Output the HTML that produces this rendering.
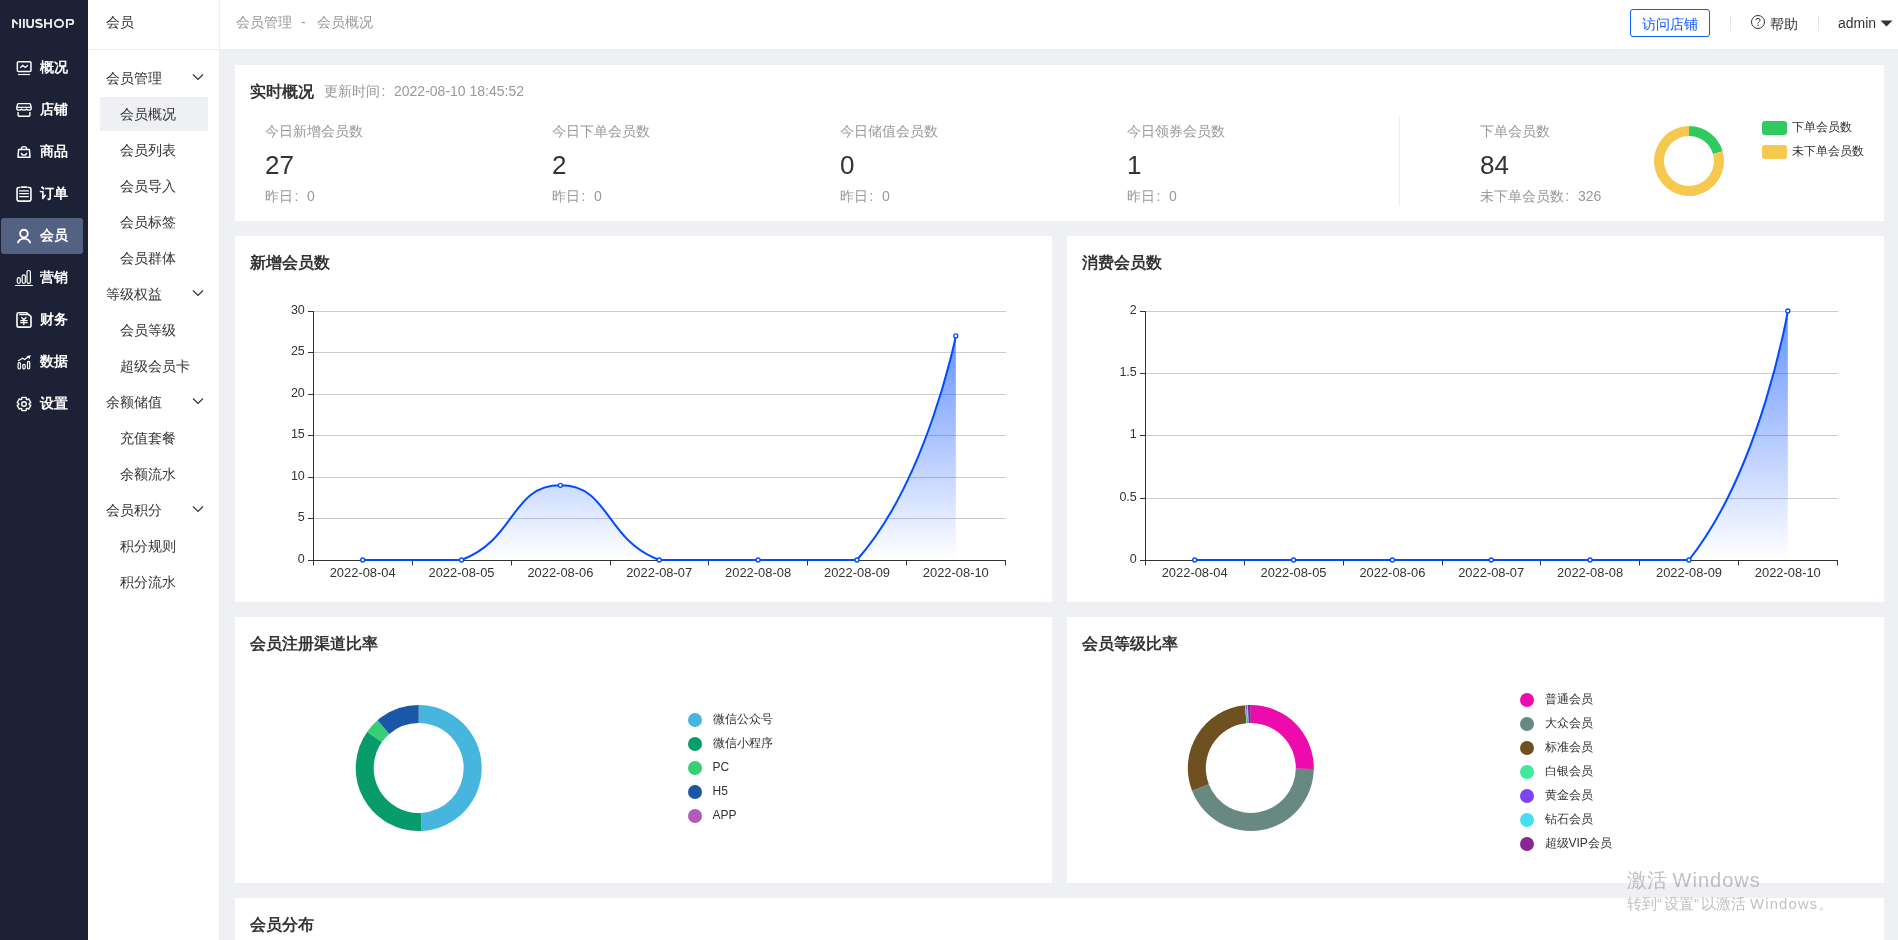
<!DOCTYPE html><html><head><meta charset="utf-8"><title>会员概况</title><style>
*{margin:0;padding:0;box-sizing:border-box}
html,body{width:1898px;height:940px;overflow:hidden;background:#eff0f4;font-family:"Liberation Sans",sans-serif;font-size:14px;color:#333}
.a{position:absolute;white-space:nowrap;line-height:18px}
#side{position:absolute;left:0;top:0;width:88px;height:940px;background:#1d2136}
#logo{position:absolute;left:12px;top:15px;color:#fff;font-size:12.5px;letter-spacing:0.9px;line-height:16px}
.mt{position:absolute;left:40px;color:#fff;line-height:18px;font-weight:bold;font-size:13.6px;white-space:nowrap}
.ic{position:absolute;left:16px}
#sub{position:absolute;left:88px;top:0;width:132px;height:940px;background:#fff;border-right:1px solid #eeeeee}
#subhd{position:absolute;left:0;top:0;width:131px;height:50px;border-bottom:1px solid #eeeeee}
#hdr{position:absolute;left:220px;top:0;width:1678px;height:49px;background:#fff}
.card{position:absolute;background:#fff}
.ttl{position:absolute;font-size:16px;font-weight:bold;color:#333;line-height:20px;white-space:nowrap}
.lab{position:absolute;color:#999;font-size:14px;line-height:18px;white-space:nowrap}
.num{position:absolute;color:#333;font-size:26px;line-height:30px;white-space:nowrap}
svg{position:absolute;left:0;top:0;overflow:visible}
</style></head><body><div id="root" style="position:absolute;left:0;top:0;width:1898px;height:940px;overflow:hidden;will-change:transform">
<div id="side">
<svg style="left:0;top:0" width="88" height="40" viewBox="0 0 88 40"><g fill="none" stroke="#ececec" stroke-width="1.9"><path d="M13 28 V19.6 L17.6 24.2 M20.1 18.9 V28" stroke-linejoin="bevel"/><path d="M23.9 18.9 V28"/><path d="M27.2 18.9 V24.4 Q27.2 27.1 30.1 27.1 Q33 27.1 33 24.4 V18.9"/><path d="M41.6 20.6 Q40.8 19.8 39 19.8 Q36.1 19.8 36.1 21.5 Q36.1 23 39 23.4 Q41.9 23.8 41.9 25.4 Q41.9 27.1 39 27.1 Q36.8 27.1 35.9 26"/><path d="M45 18.9 V28 M51 18.9 V28 M45 23.4 H51"/><ellipse cx="59" cy="23.45" rx="4.15" ry="3.65"/><path d="M66.9 28 V19.85 H71.5 Q73.2 19.85 73.2 21.9 Q73.2 24.1 71.2 24.1 H69"/></g></svg>
<div style="position:absolute;left:1px;top:218px;width:82px;height:36px;background:#536183;border-radius:3px"></div>
<svg class="ic" style="left:16px;top:60px" width="16" height="16" viewBox="0 0 16 16"><rect x="1.35" y="1.65" width="13.6" height="9.9" rx="1" fill="none" stroke="#fff" stroke-width="1.5"/><path d="M4.2 7.7 L6.8 5.4 L9.2 7.5 L12 5.2" fill="none" stroke="#fff" stroke-width="1.3"/><path d="M2 14.5 H14" stroke="#fff" stroke-width="1.2"/></svg>
<div class="mt" style="top:59px">概况</div>
<svg class="ic" style="left:16px;top:102px" width="16" height="16" viewBox="0 0 16 16"><path d="M2.6 1.6 H13.4 Q14.2 1.6 14.5 2.5 L15.2 5.6 Q15.5 8.1 13.1 8.1 Q11 8.1 10.5 6.9 Q10 8.1 8 8.1 Q6 8.1 5.5 6.9 Q5 8.1 2.9 8.1 Q0.5 8.1 0.8 5.6 L1.5 2.5 Q1.8 1.6 2.6 1.6 Z" fill="none" stroke="#fff" stroke-width="1.4" stroke-linejoin="round"/><path d="M1.2 5.3 H14.8" stroke="#fff" stroke-width="1.2"/><path d="M2.1 10.1 V13.3 Q2.1 14.2 3 14.2 H13 Q13.9 14.2 13.9 13.3 V10.1" fill="none" stroke="#fff" stroke-width="1.4"/></svg>
<div class="mt" style="top:101px">店铺</div>
<svg class="ic" style="left:16px;top:144px" width="16" height="16" viewBox="0 0 16 16"><path d="M2.6 5.5 H13.4 L14 13.2 H2 Z" fill="none" stroke="#fff" stroke-width="1.5" stroke-linejoin="round"/><path d="M5.4 5.4 V4.6 Q5.4 2.6 8 2.6 Q10.6 2.6 10.6 4.6 V5.4" fill="none" stroke="#fff" stroke-width="1.4"/><path d="M5.3 8.8 Q5.6 11.1 8 11.1 Q10.4 11.1 10.7 8.8" fill="none" stroke="#fff" stroke-width="1.3"/></svg>
<div class="mt" style="top:143px">商品</div>
<svg class="ic" style="left:16px;top:186px" width="16" height="16" viewBox="0 0 16 16"><path d="M4.3 1.5 H2.7 Q1.05 1.5 1.05 3.1 V13.5 Q1.05 15.1 2.7 15.1 H13.3 Q14.95 15.1 14.95 13.5 V3.1 Q14.95 1.5 13.3 1.5 H11.7" fill="none" stroke="#fff" stroke-width="1.6"/><path d="M5.5 1.1 H10.7" stroke="#fff" stroke-width="1.6" stroke-linecap="round"/><path d="M3.6 4.9 H12.4 M3.6 7.7 H12.4 M3.6 10.6 H12.4" stroke="#fff" stroke-width="1.2" stroke-linecap="round"/></svg>
<div class="mt" style="top:185px">订单</div>
<svg class="ic" style="left:16px;top:228px" width="16" height="16" viewBox="0 0 16 16"><circle cx="7.95" cy="5.6" r="3.85" fill="none" stroke="#fff" stroke-width="1.9"/><path d="M2 15.2 A6.05 4.6 0 0 1 14.1 15.2" fill="none" stroke="#fff" stroke-width="1.9"/></svg>
<div class="mt" style="top:227px">会员</div>
<svg class="ic" style="left:16px;top:270px" width="16" height="16" viewBox="0 0 16 16"><rect x="1.3" y="7.7" width="3" height="5.6" rx="1.5" fill="none" stroke="#fff" stroke-width="1.2"/><rect x="6.2" y="4.8" width="3.1" height="8.5" rx="1.5" fill="none" stroke="#fff" stroke-width="1.2"/><rect x="11" y="0.5" width="3.4" height="12.8" rx="1.6" fill="none" stroke="#fff" stroke-width="1.2"/><path d="M-0.4 15.5 H16.4" stroke="#fff" stroke-width="1.2" stroke-linecap="round"/></svg>
<div class="mt" style="top:269px">营销</div>
<svg class="ic" style="left:16px;top:312px" width="16" height="16" viewBox="0 0 16 16"><path d="M2.6 0.8 H10.6 L15 4.6 V13.4 Q15 15.1 13.3 15.1 H2.7 Q1 15.1 1 13.4 V2.4 Q1 0.8 2.6 0.8 Z" fill="none" stroke="#fff" stroke-width="1.6" stroke-linejoin="round"/><path d="M3.5 2.6 H12.7" stroke="#fff" stroke-width="1.2" stroke-linecap="round"/><path d="M5.4 5.2 L7.8 7.8 L10.4 5.2 M4.3 8.6 H11.6 M4.3 10.6 H11.6 M7.8 7.8 V12.9" fill="none" stroke="#fff" stroke-width="1.3"/></svg>
<div class="mt" style="top:311px">财务</div>
<svg class="ic" style="left:16px;top:354px" width="16" height="16" viewBox="0 0 16 16"><rect x="2.1" y="8.6" width="2.4" height="6.3" rx="1.1" fill="none" stroke="#fff" stroke-width="1.2"/><rect x="6.8" y="10.4" width="2.4" height="4.5" rx="1.1" fill="none" stroke="#fff" stroke-width="1.2"/><rect x="11.5" y="7.3" width="2.2" height="7.6" rx="1.1" fill="none" stroke="#fff" stroke-width="1.2"/><path d="M2 7 L6.5 4.2 L8.6 5.6 L11.8 3.3" fill="none" stroke="#fff" stroke-width="1.2" stroke-linejoin="round"/><path d="M14.7 1 L10.3 2.4 L13.6 5.1 Z" fill="#fff"/></svg>
<div class="mt" style="top:353px">数据</div>
<svg class="ic" style="left:16px;top:396px" width="16" height="16" viewBox="0 0 16 16"><path d="M5.90 3.10 L5.90 1.40 L10.10 1.40 L10.10 3.10 L11.19 3.73 L12.67 2.88 L14.77 6.52 L13.29 7.37 L13.29 8.63 L14.77 9.48 L12.67 13.12 L11.19 12.27 L10.10 12.90 L10.10 14.60 L5.90 14.60 L5.90 12.90 L4.81 12.27 L3.33 13.12 L1.23 9.48 L2.71 8.63 L2.71 7.37 L1.23 6.52 L3.33 2.88 L4.81 3.73 Z" fill="none" stroke="#fff" stroke-width="1.4" stroke-linejoin="round"/><circle cx="8" cy="8" r="2.3" fill="none" stroke="#fff" stroke-width="1.4"/></svg>
<div class="mt" style="top:395px">设置</div>
</div>
<div id="sub"><div id="subhd"><div class="a" style="left:18px;top:13px;color:#333">会员</div></div>
<div style="position:absolute;left:12px;top:97px;width:108px;height:34px;background:#eff0f4"></div>
<div class="a" style="left:18px;top:69px;color:#333">会员管理</div>
<svg style="left:104px;top:73px" width="12" height="8" viewBox="0 0 12 8"><path d="M1 1.5 L6 6.5 L11 1.5" fill="none" stroke="#333" stroke-width="1.2"/></svg>
<div class="a" style="left:32px;top:105px;color:#333">会员概况</div>
<div class="a" style="left:32px;top:141px;color:#333">会员列表</div>
<div class="a" style="left:32px;top:177px;color:#333">会员导入</div>
<div class="a" style="left:32px;top:213px;color:#333">会员标签</div>
<div class="a" style="left:32px;top:249px;color:#333">会员群体</div>
<div class="a" style="left:18px;top:285px;color:#333">等级权益</div>
<svg style="left:104px;top:289px" width="12" height="8" viewBox="0 0 12 8"><path d="M1 1.5 L6 6.5 L11 1.5" fill="none" stroke="#333" stroke-width="1.2"/></svg>
<div class="a" style="left:32px;top:321px;color:#333">会员等级</div>
<div class="a" style="left:32px;top:357px;color:#333">超级会员卡</div>
<div class="a" style="left:18px;top:393px;color:#333">余额储值</div>
<svg style="left:104px;top:397px" width="12" height="8" viewBox="0 0 12 8"><path d="M1 1.5 L6 6.5 L11 1.5" fill="none" stroke="#333" stroke-width="1.2"/></svg>
<div class="a" style="left:32px;top:429px;color:#333">充值套餐</div>
<div class="a" style="left:32px;top:465px;color:#333">余额流水</div>
<div class="a" style="left:18px;top:501px;color:#333">会员积分</div>
<svg style="left:104px;top:505px" width="12" height="8" viewBox="0 0 12 8"><path d="M1 1.5 L6 6.5 L11 1.5" fill="none" stroke="#333" stroke-width="1.2"/></svg>
<div class="a" style="left:32px;top:537px;color:#333">积分规则</div>
<div class="a" style="left:32px;top:573px;color:#333">积分流水</div>
</div>
<div id="hdr">
<div class="a" style="left:16px;top:13px;color:#999">会员管理</div><div class="a" style="left:81px;top:13px;color:#999">-</div><div class="a" style="left:97px;top:13px;color:#999">会员概况</div>
<div style="position:absolute;left:1410px;top:9px;width:80px;height:28px;border:1px solid #105cfb;border-radius:3px"></div>
<div class="a" style="left:1422px;top:15px;color:#105cfb">访问店铺</div>
<div style="position:absolute;left:1510px;top:15px;width:1px;height:16px;background:#e6e6e6"></div>
<svg style="left:1530px;top:14px" width="16" height="16" viewBox="0 0 16 16"><circle cx="8" cy="8" r="6.5" fill="none" stroke="#333" stroke-width="1"/><path d="M5.9 6.2 Q5.9 4.3 8 4.3 Q10.1 4.3 10.1 6.1 Q10.1 7.2 8.9 7.8 Q8 8.3 8 9.5" fill="none" stroke="#333" stroke-width="1"/><circle cx="8" cy="11.3" r="0.7" fill="#333"/></svg>
<div class="a" style="left:1550px;top:14.5px;color:#333">帮助</div>
<div style="position:absolute;left:1598px;top:15px;width:1px;height:16px;background:#e6e6e6"></div>
<div class="a" style="left:1618px;top:14px;color:#333">admin</div>
<svg style="left:1660px;top:20px" width="13" height="7" viewBox="0 0 13 7"><path d="M0.5 0.5 H12.5 L6.5 6.5 Z" fill="#333"/></svg>
</div>
<div class="card" style="left:235px;top:65px;width:1649px;height:156px">
<div class="ttl" style="left:15px;top:17px">实时概况</div>
<div class="lab" style="left:89px;top:17px">更新时间<span style="display:inline-block;width:14px;padding-left:1.5px">:</span>2022-08-10 18:45:52</div>
<div class="lab" style="left:30px;top:57px">今日新增会员数</div>
<div class="num" style="left:30px;top:85px">27</div>
<div class="lab" style="left:30px;top:122px">昨日<span style="display:inline-block;width:14px;padding-left:1.5px">:</span>0</div>
<div class="lab" style="left:317px;top:57px">今日下单会员数</div>
<div class="num" style="left:317px;top:85px">2</div>
<div class="lab" style="left:317px;top:122px">昨日<span style="display:inline-block;width:14px;padding-left:1.5px">:</span>0</div>
<div class="lab" style="left:605px;top:57px">今日储值会员数</div>
<div class="num" style="left:605px;top:85px">0</div>
<div class="lab" style="left:605px;top:122px">昨日<span style="display:inline-block;width:14px;padding-left:1.5px">:</span>0</div>
<div class="lab" style="left:892px;top:57px">今日领券会员数</div>
<div class="num" style="left:892px;top:85px">1</div>
<div class="lab" style="left:892px;top:122px">昨日<span style="display:inline-block;width:14px;padding-left:1.5px">:</span>0</div>
<div style="position:absolute;left:1164px;top:51px;width:1px;height:90px;background:#eeeeee"></div>
<div class="lab" style="left:1245px;top:57px">下单会员数</div>
<div class="num" style="left:1245px;top:85px">84</div>
<div class="lab" style="left:1245px;top:122px">未下单会员数<span style="display:inline-block;width:14px;padding-left:1.5px">:</span>326</div>
</div>
<svg width="1898" height="940" style="left:0;top:0;pointer-events:none">
<path d="M1689.00 126.00 A35.00 35.00 0 0 1 1722.60 151.21 L1713.00 154.01 A25.00 25.00 0 0 0 1689.00 136.00 Z" fill="#31ca61"/><path d="M1722.60 151.21 A35.00 35.00 0 1 1 1689.00 126.00 L1689.00 136.00 A25.00 25.00 0 1 0 1713.00 154.01 Z" fill="#f5c84f"/>
</svg>
<div style="position:absolute;left:1762px;top:121px;width:25px;height:14px;border-radius:3px;background:#31ca61"></div>
<div style="position:absolute;left:1762px;top:145px;width:25px;height:14px;border-radius:3px;background:#f5c84f"></div>
<div class="a" style="left:1792px;top:118px;font-size:12px;color:#333">下单会员数</div>
<div class="a" style="left:1792px;top:142px;font-size:12px;color:#333">未下单会员数</div>
<div class="card" style="left:235px;top:236px;width:817px;height:366px"><div class="ttl" style="left:15px;top:17px">新增会员数</div></div>
<div class="card" style="left:1067px;top:236px;width:817px;height:366px"><div class="ttl" style="left:15px;top:17px">消费会员数</div></div>
<div class="card" style="left:235px;top:617px;width:817px;height:266px"><div class="ttl" style="left:15px;top:17px">会员注册渠道比率</div></div>
<div class="card" style="left:1067px;top:617px;width:817px;height:266px"><div class="ttl" style="left:15px;top:17px">会员等级比率</div></div>
<div class="card" style="left:235px;top:898px;width:1649px;height:60px"><div class="ttl" style="left:15px;top:17px">会员分布</div></div>
<svg width="1898" height="940" style="left:0;top:0"><defs><linearGradient id="g313" x1="0" y1="0" x2="0" y2="1"><stop offset="0" stop-color="#004bff" stop-opacity="0.6"/><stop offset="1" stop-color="#004bff" stop-opacity="0"/></linearGradient></defs><path d="M308.0 560.5 H313.5" stroke="#333" stroke-width="1"/><text x="304.8" y="562.8" text-anchor="end" font-size="12.5" fill="#333" font-family="Liberation Sans">0</text><path d="M313.5 518.5 H1006.0" stroke="#cccccc" stroke-width="1"/><path d="M308.0 518.5 H313.5" stroke="#333" stroke-width="1"/><text x="304.8" y="521.3" text-anchor="end" font-size="12.5" fill="#333" font-family="Liberation Sans">5</text><path d="M313.5 477.5 H1006.0" stroke="#cccccc" stroke-width="1"/><path d="M308.0 477.5 H313.5" stroke="#333" stroke-width="1"/><text x="304.8" y="479.8" text-anchor="end" font-size="12.5" fill="#333" font-family="Liberation Sans">10</text><path d="M313.5 435.5 H1006.0" stroke="#cccccc" stroke-width="1"/><path d="M308.0 435.5 H313.5" stroke="#333" stroke-width="1"/><text x="304.8" y="438.3" text-anchor="end" font-size="12.5" fill="#333" font-family="Liberation Sans">15</text><path d="M313.5 394.5 H1006.0" stroke="#cccccc" stroke-width="1"/><path d="M308.0 394.5 H313.5" stroke="#333" stroke-width="1"/><text x="304.8" y="396.8" text-anchor="end" font-size="12.5" fill="#333" font-family="Liberation Sans">20</text><path d="M313.5 352.5 H1006.0" stroke="#cccccc" stroke-width="1"/><path d="M308.0 352.5 H313.5" stroke="#333" stroke-width="1"/><text x="304.8" y="355.3" text-anchor="end" font-size="12.5" fill="#333" font-family="Liberation Sans">25</text><path d="M313.5 311.5 H1006.0" stroke="#cccccc" stroke-width="1"/><path d="M308.0 311.5 H313.5" stroke="#333" stroke-width="1"/><text x="304.8" y="313.8" text-anchor="end" font-size="12.5" fill="#333" font-family="Liberation Sans">30</text><path d="M313.5 311.0 V561.0" stroke="#333" stroke-width="1"/><path d="M313.0 560.5 H1006.0" stroke="#333" stroke-width="1"/><path d="M313.5 560.0 V565.5" stroke="#333" stroke-width="1"/><path d="M412.5 560.0 V565.5" stroke="#333" stroke-width="1"/><path d="M511.5 560.0 V565.5" stroke="#333" stroke-width="1"/><path d="M610.5 560.0 V565.5" stroke="#333" stroke-width="1"/><path d="M708.5 560.0 V565.5" stroke="#333" stroke-width="1"/><path d="M807.5 560.0 V565.5" stroke="#333" stroke-width="1"/><path d="M906.5 560.0 V565.5" stroke="#333" stroke-width="1"/><path d="M1005.5 560.0 V565.5" stroke="#333" stroke-width="1"/><text x="362.7" y="577" text-anchor="middle" font-size="12" fill="#333" font-family="Liberation Sans" textLength="66" lengthAdjust="spacingAndGlyphs">2022-08-04</text><text x="461.5" y="577" text-anchor="middle" font-size="12" fill="#333" font-family="Liberation Sans" textLength="66" lengthAdjust="spacingAndGlyphs">2022-08-05</text><text x="560.4" y="577" text-anchor="middle" font-size="12" fill="#333" font-family="Liberation Sans" textLength="66" lengthAdjust="spacingAndGlyphs">2022-08-06</text><text x="659.2" y="577" text-anchor="middle" font-size="12" fill="#333" font-family="Liberation Sans" textLength="66" lengthAdjust="spacingAndGlyphs">2022-08-07</text><text x="758.1" y="577" text-anchor="middle" font-size="12" fill="#333" font-family="Liberation Sans" textLength="66" lengthAdjust="spacingAndGlyphs">2022-08-08</text><text x="857.0" y="577" text-anchor="middle" font-size="12" fill="#333" font-family="Liberation Sans" textLength="66" lengthAdjust="spacingAndGlyphs">2022-08-09</text><text x="955.8" y="577" text-anchor="middle" font-size="12" fill="#333" font-family="Liberation Sans" textLength="66" lengthAdjust="spacingAndGlyphs">2022-08-10</text><path d="M362.68 560.00 C362.68 560.00 417.67 560.00 461.54 560.00 C516.52 539.23 510.96 485.30 560.39 485.30 C609.82 485.30 604.26 539.23 659.25 560.00 C703.12 560.00 708.68 560.00 758.11 560.00 C807.54 560.00 828.54 560.00 856.96 560.00 C927.40 480.17 955.82 335.90 955.82 335.90 L955.82 560.00 L362.68 560.00 Z" fill="url(#g313)"/><path d="M362.68 560.00 C362.68 560.00 417.67 560.00 461.54 560.00 C516.52 539.23 510.96 485.30 560.39 485.30 C609.82 485.30 604.26 539.23 659.25 560.00 C703.12 560.00 708.68 560.00 758.11 560.00 C807.54 560.00 828.54 560.00 856.96 560.00 C927.40 480.17 955.82 335.90 955.82 335.90" fill="none" stroke="#004bff" stroke-width="2" stroke-linejoin="round"/><circle cx="362.68" cy="560.00" r="2" fill="#fff" stroke="#004bff" stroke-width="1.3"/><circle cx="461.54" cy="560.00" r="2" fill="#fff" stroke="#004bff" stroke-width="1.3"/><circle cx="560.39" cy="485.30" r="2" fill="#fff" stroke="#004bff" stroke-width="1.3"/><circle cx="659.25" cy="560.00" r="2" fill="#fff" stroke="#004bff" stroke-width="1.3"/><circle cx="758.11" cy="560.00" r="2" fill="#fff" stroke="#004bff" stroke-width="1.3"/><circle cx="856.96" cy="560.00" r="2" fill="#fff" stroke="#004bff" stroke-width="1.3"/><circle cx="955.82" cy="335.90" r="2" fill="#fff" stroke="#004bff" stroke-width="1.3"/></svg>
<svg width="1898" height="940" style="left:0;top:0"><defs><linearGradient id="g1145" x1="0" y1="0" x2="0" y2="1"><stop offset="0" stop-color="#004bff" stop-opacity="0.6"/><stop offset="1" stop-color="#004bff" stop-opacity="0"/></linearGradient></defs><path d="M1140.0 560.5 H1145.5" stroke="#333" stroke-width="1"/><text x="1136.8" y="562.8" text-anchor="end" font-size="12.5" fill="#333" font-family="Liberation Sans">0</text><path d="M1145.5 498.5 H1838.0" stroke="#cccccc" stroke-width="1"/><path d="M1140.0 498.5 H1145.5" stroke="#333" stroke-width="1"/><text x="1136.8" y="500.6" text-anchor="end" font-size="12.5" fill="#333" font-family="Liberation Sans">0.5</text><path d="M1145.5 435.5 H1838.0" stroke="#cccccc" stroke-width="1"/><path d="M1140.0 435.5 H1145.5" stroke="#333" stroke-width="1"/><text x="1136.8" y="438.3" text-anchor="end" font-size="12.5" fill="#333" font-family="Liberation Sans">1</text><path d="M1145.5 373.5 H1838.0" stroke="#cccccc" stroke-width="1"/><path d="M1140.0 373.5 H1145.5" stroke="#333" stroke-width="1"/><text x="1136.8" y="376.1" text-anchor="end" font-size="12.5" fill="#333" font-family="Liberation Sans">1.5</text><path d="M1145.5 311.5 H1838.0" stroke="#cccccc" stroke-width="1"/><path d="M1140.0 311.5 H1145.5" stroke="#333" stroke-width="1"/><text x="1136.8" y="313.8" text-anchor="end" font-size="12.5" fill="#333" font-family="Liberation Sans">2</text><path d="M1145.5 311.0 V561.0" stroke="#333" stroke-width="1"/><path d="M1145.0 560.5 H1838.0" stroke="#333" stroke-width="1"/><path d="M1145.5 560.0 V565.5" stroke="#333" stroke-width="1"/><path d="M1244.5 560.0 V565.5" stroke="#333" stroke-width="1"/><path d="M1343.5 560.0 V565.5" stroke="#333" stroke-width="1"/><path d="M1442.5 560.0 V565.5" stroke="#333" stroke-width="1"/><path d="M1540.5 560.0 V565.5" stroke="#333" stroke-width="1"/><path d="M1639.5 560.0 V565.5" stroke="#333" stroke-width="1"/><path d="M1738.5 560.0 V565.5" stroke="#333" stroke-width="1"/><path d="M1837.5 560.0 V565.5" stroke="#333" stroke-width="1"/><text x="1194.7" y="577" text-anchor="middle" font-size="12" fill="#333" font-family="Liberation Sans" textLength="66" lengthAdjust="spacingAndGlyphs">2022-08-04</text><text x="1293.5" y="577" text-anchor="middle" font-size="12" fill="#333" font-family="Liberation Sans" textLength="66" lengthAdjust="spacingAndGlyphs">2022-08-05</text><text x="1392.4" y="577" text-anchor="middle" font-size="12" fill="#333" font-family="Liberation Sans" textLength="66" lengthAdjust="spacingAndGlyphs">2022-08-06</text><text x="1491.2" y="577" text-anchor="middle" font-size="12" fill="#333" font-family="Liberation Sans" textLength="66" lengthAdjust="spacingAndGlyphs">2022-08-07</text><text x="1590.1" y="577" text-anchor="middle" font-size="12" fill="#333" font-family="Liberation Sans" textLength="66" lengthAdjust="spacingAndGlyphs">2022-08-08</text><text x="1689.0" y="577" text-anchor="middle" font-size="12" fill="#333" font-family="Liberation Sans" textLength="66" lengthAdjust="spacingAndGlyphs">2022-08-09</text><text x="1787.8" y="577" text-anchor="middle" font-size="12" fill="#333" font-family="Liberation Sans" textLength="66" lengthAdjust="spacingAndGlyphs">2022-08-10</text><path d="M1194.68 560.00 C1194.68 560.00 1244.11 560.00 1293.54 560.00 C1342.96 560.00 1342.96 560.00 1392.39 560.00 C1441.82 560.00 1441.82 560.00 1491.25 560.00 C1540.68 560.00 1540.68 560.00 1590.11 560.00 C1639.54 560.00 1662.32 560.00 1688.96 560.00 C1761.18 469.06 1787.82 311.00 1787.82 311.00 L1787.82 560.00 L1194.68 560.00 Z" fill="url(#g1145)"/><path d="M1194.68 560.00 C1194.68 560.00 1244.11 560.00 1293.54 560.00 C1342.96 560.00 1342.96 560.00 1392.39 560.00 C1441.82 560.00 1441.82 560.00 1491.25 560.00 C1540.68 560.00 1540.68 560.00 1590.11 560.00 C1639.54 560.00 1662.32 560.00 1688.96 560.00 C1761.18 469.06 1787.82 311.00 1787.82 311.00" fill="none" stroke="#004bff" stroke-width="2" stroke-linejoin="round"/><circle cx="1194.68" cy="560.00" r="2" fill="#fff" stroke="#004bff" stroke-width="1.3"/><circle cx="1293.54" cy="560.00" r="2" fill="#fff" stroke="#004bff" stroke-width="1.3"/><circle cx="1392.39" cy="560.00" r="2" fill="#fff" stroke="#004bff" stroke-width="1.3"/><circle cx="1491.25" cy="560.00" r="2" fill="#fff" stroke="#004bff" stroke-width="1.3"/><circle cx="1590.11" cy="560.00" r="2" fill="#fff" stroke="#004bff" stroke-width="1.3"/><circle cx="1688.96" cy="560.00" r="2" fill="#fff" stroke="#004bff" stroke-width="1.3"/><circle cx="1787.82" cy="311.00" r="2" fill="#fff" stroke="#004bff" stroke-width="1.3"/></svg>
<svg width="1898" height="940" style="left:0;top:0">
<path d="M418.70 705.00 A63.00 63.00 0 0 1 421.67 830.93 L420.82 812.95 A45.00 45.00 0 0 0 418.70 723.00 Z" fill="#46b6de"/><path d="M421.67 830.93 A63.00 63.00 0 0 1 367.22 731.68 L381.93 742.06 A45.00 45.00 0 0 0 420.82 812.95 Z" fill="#089b6b"/><path d="M367.22 731.68 A63.00 63.00 0 0 1 377.53 720.31 L389.30 733.94 A45.00 45.00 0 0 0 381.93 742.06 Z" fill="#36cf74"/><path d="M377.53 720.31 A63.00 63.00 0 0 1 418.70 705.00 L418.70 723.00 A45.00 45.00 0 0 0 389.30 733.94 Z" fill="#1b57a7"/>
<path d="M1250.80 705.00 A63.00 63.00 0 0 1 1313.79 769.10 L1295.79 768.79 A45.00 45.00 0 0 0 1250.80 723.00 Z" fill="#ee0bae"/><path d="M1313.79 769.10 A63.00 63.00 0 0 1 1192.06 790.78 L1208.85 784.27 A45.00 45.00 0 0 0 1295.79 768.79 Z" fill="#688882"/><path d="M1192.06 790.78 A63.00 63.00 0 0 1 1244.87 705.28 L1246.57 723.20 A45.00 45.00 0 0 0 1208.85 784.27 Z" fill="#6f5121"/><path d="M1244.87 705.28 A63.00 63.00 0 0 1 1245.86 705.19 L1247.27 723.14 A45.00 45.00 0 0 0 1246.57 723.20 Z" fill="#3deb9b"/><path d="M1245.86 705.19 A63.00 63.00 0 0 1 1246.84 705.12 L1247.97 723.09 A45.00 45.00 0 0 0 1247.27 723.14 Z" fill="#7b45f0"/><path d="M1246.84 705.12 A63.00 63.00 0 0 1 1247.83 705.07 L1248.68 723.05 A45.00 45.00 0 0 0 1247.97 723.09 Z" fill="#48def0"/><path d="M1247.83 705.07 A63.00 63.00 0 0 1 1250.80 705.00 L1250.80 723.00 A45.00 45.00 0 0 0 1248.68 723.05 Z" fill="#8a2792"/>
<circle cx="695" cy="720" r="7" fill="#46b6de"/>
<text x="712.5" y="722.5" font-size="12" fill="#333" font-family="Liberation Sans">微信公众号</text>
<circle cx="695" cy="744" r="7" fill="#089b6b"/>
<text x="712.5" y="746.5" font-size="12" fill="#333" font-family="Liberation Sans">微信小程序</text>
<circle cx="695" cy="768" r="7" fill="#36cf74"/>
<text x="712.5" y="770.5" font-size="12" fill="#333" font-family="Liberation Sans">PC</text>
<circle cx="695" cy="792" r="7" fill="#1b57a7"/>
<text x="712.5" y="794.5" font-size="12" fill="#333" font-family="Liberation Sans">H5</text>
<circle cx="695" cy="816" r="7" fill="#b35bb9"/>
<text x="712.5" y="818.5" font-size="12" fill="#333" font-family="Liberation Sans">APP</text>
<circle cx="1527" cy="700" r="7" fill="#ee0bae"/>
<text x="1544.5" y="702.5" font-size="12" fill="#333" font-family="Liberation Sans">普通会员</text>
<circle cx="1527" cy="724" r="7" fill="#688882"/>
<text x="1544.5" y="726.5" font-size="12" fill="#333" font-family="Liberation Sans">大众会员</text>
<circle cx="1527" cy="748" r="7" fill="#6f5121"/>
<text x="1544.5" y="750.5" font-size="12" fill="#333" font-family="Liberation Sans">标准会员</text>
<circle cx="1527" cy="772" r="7" fill="#3deb9b"/>
<text x="1544.5" y="774.5" font-size="12" fill="#333" font-family="Liberation Sans">白银会员</text>
<circle cx="1527" cy="796" r="7" fill="#7b45f0"/>
<text x="1544.5" y="798.5" font-size="12" fill="#333" font-family="Liberation Sans">黄金会员</text>
<circle cx="1527" cy="820" r="7" fill="#48def0"/>
<text x="1544.5" y="822.5" font-size="12" fill="#333" font-family="Liberation Sans">钻石会员</text>
<circle cx="1527" cy="844" r="7" fill="#8a2792"/>
<text x="1544.5" y="846.5" font-size="12" fill="#333" font-family="Liberation Sans">超级VIP会员</text>
</svg>
<div class="a" style="left:1627px;top:868px;font-size:20px;line-height:24px;color:rgba(150,150,150,0.6)">激活 <span style="letter-spacing:1px">Windows</span></div>
<div class="a" style="left:1627px;top:895px;font-size:14.8px;line-height:18px;color:rgba(150,150,150,0.6)">转到<span style="letter-spacing:2px">“</span>设置<span style="letter-spacing:2px">”</span>以激活 <span style="letter-spacing:1.2px">Windows</span>。</div>
</div></body></html>
